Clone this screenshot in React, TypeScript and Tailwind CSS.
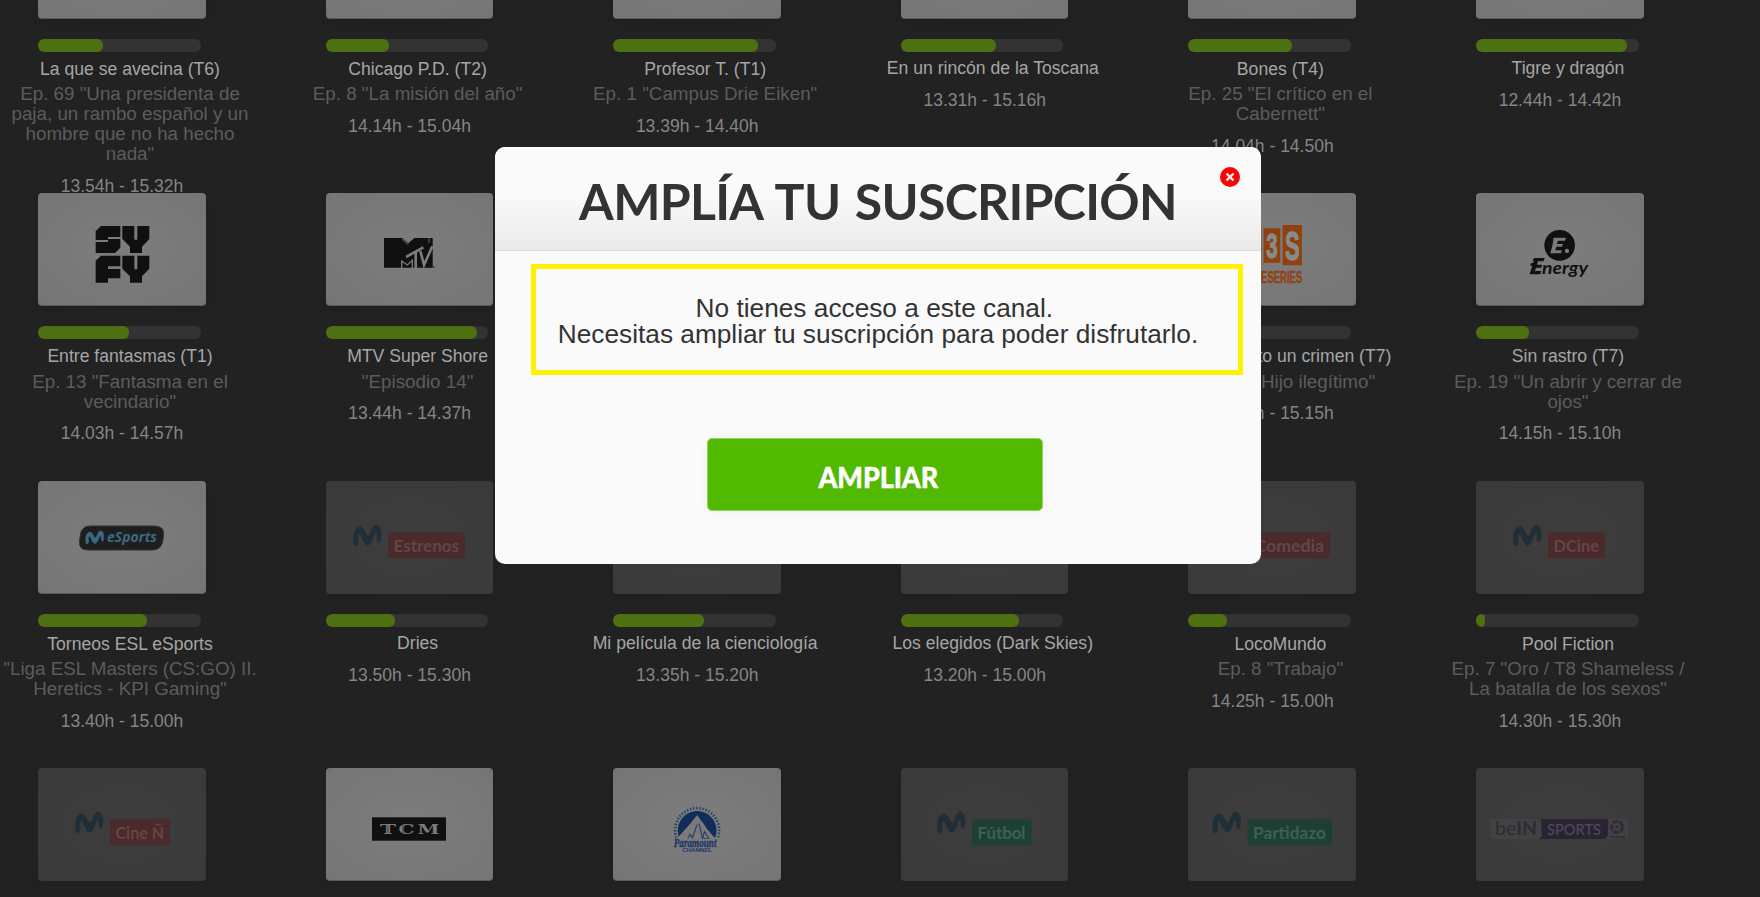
import { Fragment, ReactNode } from "react";

const MARK =
  "M1 20C-1 12 1 2 7 2C11 2 12 11 15 11C18 11 18 0 23 0C28 0 28.500 10 26.500 16C25.500 18 24 15 24 13C24 10 24 8 22.500 8C20 8 19 20 14.500 20C10 20 9 9 6 9C3.500 9 4.500 15 4.800 17C5 20 2 22 1 20Z";

function LogoCanvas({ children }: { children: ReactNode }) {
  return (
    <svg viewBox="0 0 168 113" className="h-[113px] w-[168px]" aria-hidden>
      {children}
    </svg>
  );
}

function MovistarLogo({ label, left, width, color }: { label: string; left: number; width: number; color: "red" | "green" }) {
  return (
    <LogoCanvas>
      <path d={MARK} transform={`translate(${left - 34.8} 44)`} strokeWidth={0.8} className="fill-[#1f2e37] stroke-[#1f2e37]" />
      <rect x={left} y={51.3} width={width} height={26} rx={2} className={color === "red" ? "fill-[#4a2a2b]" : "fill-[#1d4033]"} />
      <text
        x={left + 5.5}
        y={70.6}
        textLength={width - 11.5}
        lengthAdjust="spacingAndGlyphs"
        className={color === "red" ? "fill-[#694345] font-['Lato'] text-[17px] font-bold" : "fill-[#3d6153] font-['Lato'] text-[17px] font-bold"}
      >
        {label}
      </text>
    </LogoCanvas>
  );
}

function SyfyLogo() {
  return (
    <LogoCanvas>
      <g transform="translate(42 22) scale(0.3333)" className="fill-[#101010]">
        <path d="M63 33H121V66H84V72H121V98L105 114H47V81H84V75H47V48Z" />
        <path d="M127 33H163V74H172V33H208V72L186 95V114H150V95L127 72Z" />
        <path d="M63 122H121V154H84V162H121V190H84V203H47V137Z" />
        <path d="M127 122H163V163H172V122H208V161L186 184V203H150V184L127 161Z" />
      </g>
    </LogoCanvas>
  );
}

function MtvLogo() {
  return (
    <LogoCanvas>
      <g transform="translate(-245.600 22) scale(0.3333)">
        <path d="M911 69H965L984 85L1002 69H1057V158H911Z" className="fill-[#101010]" />
        <path d="M977 126L1029 97M1006 110V159M1020 108L1031 150L1056 94" fill="none" strokeWidth={8} className="stroke-[#7b7b7b]" />
        <path d="M964 159V138L981 150L996 136V159" fill="none" strokeWidth={4} className="stroke-[#7b7b7b]" />
        <path d="M965 73L984 89M1046 69V84" fill="none" strokeWidth={2.5} className="stroke-[#7b7b7b]" />
        <rect x={1058} y={153} width={5} height={5} className="fill-[#3a3a3a]" />
      </g>
    </LogoCanvas>
  );
}

function A3SeriesLogo() {
  return (
    <LogoCanvas>
      <g transform="translate(41.600 22) scale(0.3333)" className="fill-[#8f4210]">
        <path d="M20 30H95V151H20ZM102 40H152V143H102ZM159 30H217V151H159Z" />
        <g strokeWidth={4} className="fill-[#8a8a8a] stroke-[#8a8a8a]">
          <text x={110} y={130} textLength={34} lengthAdjust="spacingAndGlyphs" className="font-['Liberation_Sans'] text-[108px] font-bold">3</text>
          <text x={166} y={135} textLength={44} lengthAdjust="spacingAndGlyphs" className="font-['Liberation_Sans'] text-[122px] font-bold">S</text>
        </g>
        <text x={38} y={205} textLength={180} lengthAdjust="spacingAndGlyphs" strokeWidth={1.5} className="stroke-[#8f4210] font-['Liberation_Sans'] text-[52px] font-bold">ATRESERIES</text>
      </g>
    </LogoCanvas>
  );
}

function EnergyLogo() {
  return (
    <LogoCanvas>
      <g transform="translate(-246 22) scale(0.3333)">
        <circle cx={989} cy={91} r={46} className="fill-[#101010]" />
        <path d="M971 68H1008L1005 77H984L981 87H999L996 95H979L976 106H996L993 115H961L967 92Z" className="fill-[#7b7b7b]" />
        <circle cx={1011} cy={108} r={6.5} className="fill-[#7b7b7b]" />
        <path d="M912 129H944L941 139H924L921 149H937L934 158H918L915 168H934L931 178H899L907 152H900L904 144H909L912 138H908Z" className="fill-[#101010]" />
        <text x={936} y={178} textLength={138} lengthAdjust="spacingAndGlyphs" className="fill-[#101010] font-['Lato'] text-[53px] font-bold italic">nergy</text>
      </g>
    </LogoCanvas>
  );
}

function ESportsLogo() {
  return (
    <LogoCanvas>
      <path d="M52 45H116Q127 45 125.500 55L124.500 61Q123 69 114 69H50Q40.500 69 41.500 60L42.500 53Q44 45 52 45Z" strokeWidth={1} className="fill-[#1e1e1e] stroke-[#333333]" />
      <path d={MARK} transform="translate(47.500 50) scale(0.66 0.62)" strokeWidth={1} className="fill-[#3e6784] stroke-[#3e6784]" />
      <text x={69} y={61.3} textLength={50} lengthAdjust="spacingAndGlyphs" className="fill-[#3e6784] font-['Open_Sans'] text-[15px] font-bold italic">eSports</text>
    </LogoCanvas>
  );
}

function TcmLogo() {
  return (
    <LogoCanvas>
      <rect x={46} y={49.3} width={74} height={23.4} className="fill-[#101010]" />
      <g className="fill-[#7b7b7b] font-['DejaVu_Serif'] text-[13.5px] font-bold">
        <text x={54} y={65.8} textLength={16} lengthAdjust="spacingAndGlyphs">T</text>
        <text x={72.5} y={65.8} textLength={16} lengthAdjust="spacingAndGlyphs">C</text>
        <text x={91.5} y={65.8} textLength={22} lengthAdjust="spacingAndGlyphs">M</text>
      </g>
      <path d="M61.800 58V65M77 57V65M99 57L106 65" strokeWidth={0.6} className="stroke-[#101010]" />
    </LogoCanvas>
  );
}

function ParamountLogo() {
  return (
    <LogoCanvas>
      <g transform="translate(46.800 27) scale(0.3333)">
        <path d="M50 128A66 66 0 1 1 174 128" fill="none" strokeWidth={8} strokeDasharray="4.500 5" className="stroke-[#27426c]" />
        <path d="M60 132A58 58 0 1 1 164 132Z" className="fill-[#122d5a]" />
        <path d="M112 60L122 74L130 84L142 103L170 134L134 130L120 136L98 133L78 137L48 136L68 112L86 92L98 78Z" className="fill-[#7b7b7b]" />
        <path d="M112 88L98 128L91 118L84 130M118 86L124 112L128 132L134 110L148 132" fill="none" strokeWidth={3.5} className="stroke-[#23406c]" />
        <text x={42} y={157} textLength={128} lengthAdjust="spacingAndGlyphs" strokeWidth={1} className="fill-[#1b3866] stroke-[#1b3866] font-['Liberation_Serif'] text-[36px] font-bold italic">Paramount</text>
        <text x={67} y={172} textLength={90} lengthAdjust="spacingAndGlyphs" className="fill-[#1b3866] font-['Liberation_Sans'] text-[18px] font-bold">CHANNEL</text>
      </g>
    </LogoCanvas>
  );
}

function BeinLogo() {
  return (
    <LogoCanvas>
      <path d="M14 51H63Q65 51 65 54V71H18Q14 71 14 67Z" className="fill-[#424242]" />
      <path d="M65 51H132V71H63Q66 69 66 65Z" className="fill-[#2a2333]" />
      <path d="M133 51H152V68Q152 71 149 71H129Q132 69 132 64Z" className="fill-[#424242]" />
      <text x={19} y={67} textLength={42} lengthAdjust="spacingAndGlyphs" className="fill-[#302a36] font-['Lato'] text-[18.5px]">be<tspan className="font-bold">IN</tspan></text>
      <text x={71} y={66.5} textLength={54} lengthAdjust="spacingAndGlyphs" className="fill-[#4f4a57] font-['Lato'] text-[15px] font-medium">SPORTS</text>
      <circle cx={141} cy={59} r={5.5} fill="none" strokeWidth={3} strokeDasharray="5.500 1.400" className="stroke-[#302a38]" />
      <circle cx={141} cy={59} r={1.6} className="fill-[#302a38]" />
      <path d="M134 69H149" strokeWidth={2} strokeDasharray="2 0.600" className="stroke-[#302a38]" />
    </LogoCanvas>
  );
}

interface Channel {
  logo?: ReactNode;
  locked?: boolean;
  elapsed?: number;
  title?: string;
  episode?: string[];
  time?: string;
}

const channels: Channel[] = [
  { elapsed: 65, title: "La que se avecina (T6)", episode: ['Ep. 69 "Una presidenta de', "paja, un rambo español y un", "hombre que no ha hecho", 'nada"'], time: "13.54h - 15.32h" },
  { elapsed: 63, title: "Chicago P.D. (T2)", episode: ['Ep. 8 "La misión del año"'], time: "14.14h - 15.04h" },
  { elapsed: 145, title: "Profesor T. (T1)", episode: ['Ep. 1 "Campus Drie Eiken"'], time: "13.39h - 14.40h" },
  { elapsed: 95, title: "En un rincón de la Toscana", time: "13.31h - 15.16h" },
  { elapsed: 104, title: "Bones (T4)", episode: ['Ep. 25 "El crítico en el', 'Cabernett"'], time: "14.04h - 14.50h" },
  { elapsed: 151, title: "Tigre y dragón", time: "12.44h - 14.42h" },

  { logo: <SyfyLogo />, elapsed: 91, title: "Entre fantasmas (T1)", episode: ['Ep. 13 "Fantasma en el', 'vecindario"'], time: "14.03h - 14.57h" },
  { logo: <MtvLogo />, elapsed: 151, title: "MTV Super Shore", episode: ['"Episodio 14"'], time: "13.44h - 14.37h" },
  {},
  {},
  { logo: <A3SeriesLogo />, elapsed: 40, title: "Se ha escrito un crimen (T7)", episode: ['Ep. 116 "Hijo ilegítimo"'], time: "14.15h - 15.15h" },
  { logo: <EnergyLogo />, elapsed: 53, title: "Sin rastro (T7)", episode: ['Ep. 19 "Un abrir y cerrar de', 'ojos"'], time: "14.15h - 15.10h" },

  { logo: <ESportsLogo />, elapsed: 109, title: "Torneos ESL eSports", episode: ['"Liga ESL Masters (CS:GO) II.', 'Heretics - KPI Gaming"'], time: "13.40h - 15.00h" },
  { logo: <MovistarLogo label="Estrenos" left={62} width={77} color="red" />, locked: true, elapsed: 69, title: "Dries", time: "13.50h - 15.30h" },
  { locked: true, elapsed: 91, title: "Mi película de la cienciología", time: "13.35h - 15.20h" },
  { locked: true, elapsed: 118, title: "Los elegidos (Dark Skies)", time: "13.20h - 15.00h" },
  { logo: <MovistarLogo label="Comedia" left={61} width={81} color="red" />, locked: true, elapsed: 39, title: "LocoMundo", episode: ['Ep. 8 "Trabajo"'], time: "14.25h - 15.00h" },
  { logo: <MovistarLogo label="DCine" left={72} width={57} color="red" />, locked: true, elapsed: 9, title: "Pool Fiction", episode: ['Ep. 7 "Oro / T8 Shameless /', 'La batalla de los sexos"'], time: "14.30h - 15.30h" },

  { logo: <MovistarLogo label="Cine Ñ" left={72} width={60} color="red" />, locked: true },
  { logo: <TcmLogo /> },
  { logo: <ParamountLogo /> },
  { logo: <MovistarLogo label="Fútbol" left={71} width={59.5} color="green" />, locked: true },
  { logo: <MovistarLogo label="Partidazo" left={59.5} width={84.5} color="green" />, locked: true },
  { logo: <BeinLogo />, locked: true },
];

function ChannelCell({ logo, locked, elapsed, title, episode, time }: Channel) {
  return (
    <article className="flex w-[260px] flex-col whitespace-nowrap">
      <div
        className={
          locked
            ? "ml-[38px] h-[113px] w-[167.6px] shrink-0 overflow-hidden rounded-[4px] bg-radial from-[#3d3d3d] to-[#3a3a3a] shadow-[0_3px_8px_rgba(0,0,0,0.08)]"
            : "ml-[38px] h-[113px] w-[167.6px] shrink-0 overflow-hidden rounded-[4px] border-b border-[#5c5c5c] bg-radial from-[#7d7d7d] to-[#757575] shadow-[0_3px_8px_rgba(0,0,0,0.1)]"
        }
      >
        {logo}
      </div>
      {title && (
        <>
          <div className="mt-[20.4px] ml-[38px] h-[13px] w-[162.6px] shrink-0 overflow-hidden rounded-[6px] bg-[#333333]">
            <div className="h-full rounded-[6px] bg-[#4d7110]" style={{ width: elapsed }} />
          </div>
          <h3 className={episode ? "mt-[6.8px] text-center text-[17.6px] leading-[20px] text-[#a6a6a6]" : "mt-[5.8px] text-center text-[17.6px] leading-[20px] text-[#a6a6a6]"}>
            {title}
          </h3>
          {episode && (
            <p className="mt-[5.4px] -mb-[0.4px] text-center text-[18.8px] leading-[20px] text-[#5c5c5c]">
              {episode.map((line, i) => (
                <Fragment key={line}>
                  {i > 0 && <br />}
                  {line}
                </Fragment>
              ))}
            </p>
          )}
          <p className="mt-[12px] mr-[16px] text-center text-[17.5px] leading-[20px] text-[#858585]">{time}</p>
        </>
      )}
    </article>
  );
}

function SubscriptionDialog() {
  return (
    <section role="dialog" className="relative flex h-[417px] w-[766px] flex-col overflow-hidden rounded-[10px] bg-[#fafafa] text-[#333333]">
      <header className="flex h-[104px] shrink-0 justify-center border-b border-[#dcdcdc] bg-linear-to-b from-[#fafafa] from-45% to-[#eaeaea] pt-[24px]">
        <h2 className="font-['Lato'] text-[50px] leading-[60px] font-bold tracking-[-0.7px] [word-spacing:3px]">AMPLÍA TU SUSCRIPCIÓN</h2>
      </header>
      <button aria-label="Cerrar" className="absolute top-[20px] right-[21px] h-5 w-5">
        <svg viewBox="0 0 20 20" className="h-5 w-5">
          <circle cx={10} cy={10} r={10} className="fill-[#fa0505]" />
          <path d="M6.500 6.500L13.500 13.500M13.500 6.500L6.500 13.500" strokeWidth={2.4} className="stroke-[#fff0f0]" />
        </svg>
      </button>
      <div className="mt-[13px] ml-[36px] h-[111px] w-[712px] shrink-0 border-[5px] border-[#fff200] pt-[26px] pr-[18px] text-center text-[26.25px] leading-[26.4px] whitespace-nowrap">
        No tienes acceso a este canal.&nbsp;
        <br />
        Necesitas ampliar tu suscripción para poder disfrutarlo.
      </div>
      <button className="mt-[63px] ml-[212px] flex h-[73px] w-[336px] shrink-0 items-center justify-center rounded-[5px] border border-[#8fd45c] bg-[#50b900] pt-[5px] pl-[6px] font-['Lato'] text-[29px] font-black text-white shadow-[0_0_12px_rgba(0,0,0,0.04)]">
        <span className="scale-x-[0.93] tracking-[-0.1px] [-webkit-text-stroke:0.4px_white]">AMPLIAR</span>
      </button>
    </section>
  );
}

export default function App() {
  return (
    <main className="relative h-[897px] w-[1760px] overflow-hidden bg-[#222222] font-['Liberation_Sans',sans-serif]">
      <div className="-mt-[94.5px] grid auto-rows-[287.5px] grid-cols-[repeat(6,260px)] gap-x-[27.6px]">
        {channels.map((channel, i) => (
          <ChannelCell key={i} {...channel} />
        ))}
      </div>
      <div className="absolute inset-0 flex justify-center pt-[147px] pr-[4px]">
        <SubscriptionDialog />
      </div>
    </main>
  );
}
